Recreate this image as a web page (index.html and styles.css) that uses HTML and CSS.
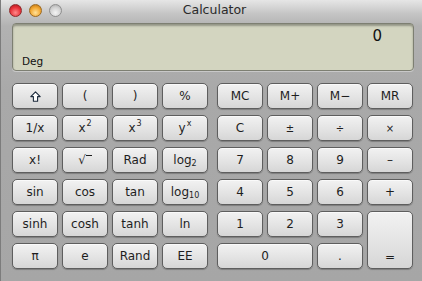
FILE: index.html
```html
<!DOCTYPE html>
<html lang="en">

<head>
    <meta charset="UTF-8">
    <meta name="viewport" content="width=device-width, initial-scale=1.0">
    <title>Calculator</title>
    <link rel="stylesheet" href="styles.css">
</head>

<body>
    <div class="window">
        <div class="titlebar">
            <div class="lights">
                <span class="light red"></span>
                <span class="light yellow"></span>
                <span class="light gray"></span>
            </div>
            <div class="title">Calculator</div>
        </div>

        <div class="display">
            <div class="value">0</div>
            <div class="mode">Deg</div>
        </div>

        <div class="keypad">
            <div class="keys">
                <button class="key">
                    <svg width="11" height="11" viewBox="0 0 11 11">
                        <path d="M5.5 0.8 L10.2 5.6 L7.6 5.6 L7.6 10.2 L3.4 10.2 L3.4 5.6 L0.8 5.6 Z" fill="#fff" stroke="#1c2a3c" stroke-width="1.1" stroke-linejoin="round"/>
                    </svg>
                </button>
                <button class="key">(</button>
                <button class="key">)</button>
                <button class="key">%</button>

                <button class="key">1/x</button>
                <button class="key">x<sup>2</sup></button>
                <button class="key">x<sup>3</sup></button>
                <button class="key">y<sup>x</sup></button>

                <button class="key">x!</button>
                <button class="key">√<span class="bar"></span></button>
                <button class="key">Rad</button>
                <button class="key">log<sub>2</sub></button>

                <button class="key">sin</button>
                <button class="key">cos</button>
                <button class="key">tan</button>
                <button class="key">log<sub>10</sub></button>

                <button class="key">sinh</button>
                <button class="key">cosh</button>
                <button class="key">tanh</button>
                <button class="key">ln</button>

                <button class="key">π</button>
                <button class="key">e</button>
                <button class="key">Rand</button>
                <button class="key">EE</button>
            </div>

            <div class="keys">
                <button class="key">MC</button>
                <button class="key">M+</button>
                <button class="key">M−</button>
                <button class="key">MR</button>

                <button class="key">C</button>
                <button class="key small">±</button>
                <button class="key small">÷</button>
                <button class="key small">×</button>

                <button class="key">7</button>
                <button class="key">8</button>
                <button class="key">9</button>
                <button class="key">–</button>

                <button class="key">4</button>
                <button class="key">5</button>
                <button class="key">6</button>
                <button class="key">+</button>

                <button class="key">1</button>
                <button class="key">2</button>
                <button class="key">3</button>
                <button class="key equals">=</button>

                <button class="key zero">0</button>
                <button class="key">.</button>
            </div>
        </div>
    </div>
</body>

</html>
```

FILE: styles.css
```css
body {
    margin: 0;
    font-family: "DejaVu Sans", sans-serif;
    background-color: #a6a6a6;
}

.window {
    width: 422px;
    height: 281px;
    box-sizing: border-box;
    border-left: 1px solid #7c7c7c;
    padding: 0 8px 0 11px;
    background: linear-gradient(#e6e6e6 0px, #c4c4c4 14px, #b2b2b2 26px, #a9a9a9 90px, #a6a6a6 100%);
}

.titlebar {
    position: relative;
    height: 23px;
}

.lights {
    position: absolute;
    left: -3.5px;
    top: 3.5px;
    display: flex;
    gap: 7px;
}

.light {
    width: 13px;
    height: 13px;
    border-radius: 50%;
    box-sizing: border-box;
}

.red {
    background: radial-gradient(circle at 50% 70%, #ff8a8a 0%, #e8333a 55%, #a51418 100%);
    border: 1px solid #8e2a2a;
}

.yellow {
    background: radial-gradient(circle at 50% 70%, #ffe29a 0%, #f2a731 55%, #b36a0e 100%);
    border: 1px solid #9c6a20;
}

.gray {
    background: radial-gradient(circle at 50% 70%, #f4f4f4 0%, #d2d2d2 55%, #a4a4a4 100%);
    border: 1px solid #8e8e8e;
}

.title {
    text-align: center;
    font-size: 12.5px;
    line-height: 20px;
    color: #2a2a2a;
    padding-left: 3px;
}

.display {
    height: 48px;
    box-sizing: border-box;
    background-color: #d3d5c0;
    border: 1px solid #7d7f72;
    border-radius: 4px;
    box-shadow: inset 0 2px 2px rgba(0, 0, 0, 0.3), 0 1px 0 rgba(255, 255, 255, 0.35);
    padding: 3px 31px 0 9px;
    display: flex;
    flex-direction: column;
    justify-content: space-between;
}

.value {
    text-align: right;
    font-size: 15px;
    line-height: 18px;
    color: #111;
}

.mode {
    font-size: 10.5px;
    line-height: 16px;
    color: #111;
    margin-bottom: 1px;
}

.keypad {
    display: flex;
    gap: 9px;
    margin-top: 12px;
}

.keys {
    display: grid;
    grid-template-columns: repeat(4, 46px);
    grid-auto-rows: 26px;
    column-gap: 4px;
    row-gap: 6px;
}

.key {
    margin: 0;
    padding: 0;
    font-family: "DejaVu Sans", sans-serif;
    font-size: 12px;
    color: #1e1e1e;
    background: linear-gradient(#f2f2f2, #e2e2e2 60%, #d6d6d6);
    border: 1px solid #5e5e5e;
    border-radius: 5px;
    box-shadow: 0 1px 1px rgba(0, 0, 0, 0.25), inset 0 1px 0 #fafafa;
    display: flex;
    align-items: center;
    justify-content: center;
}

.key sup,
.key sub {
    font-size: 8px;
    line-height: 0;
    position: relative;
}

.key sup {
    top: -4px;
    margin-left: 1px;
}

.key sub {
    top: 4px;
}

.key .bar {
    display: inline-block;
    width: 6px;
    height: 9px;
    border-top: 1px solid #1e1e1e;
    margin-top: -1px;
}

.small {
    font-size: 10px;
}

.equals {
    grid-row: span 2;
    align-items: flex-end;
    padding-bottom: 4px;
}

.zero {
    grid-column: span 2;
}
```
